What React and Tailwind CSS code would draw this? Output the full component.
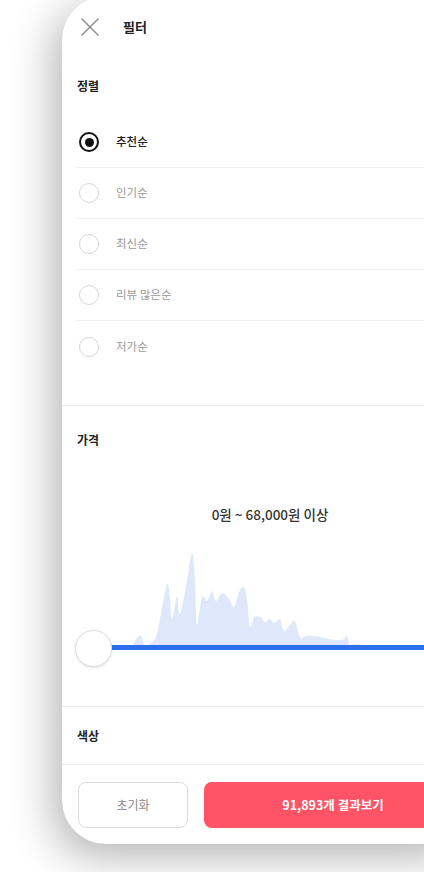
import { X } from 'lucide-react';

const font = { fontFamily: '"Noto Sans CJK KR", "Noto Sans", sans-serif' };

const sorts = ['추천순', '인기순', '최신순', '리뷰 많은순', '저가순'];

// histogram outline, panel-relative x, chart-box-relative y (baseline 103)
const pts = [
  [70, 103], [78, 91], [83, 101], [93, 95], [98, 75], [105, 40], [108, 55], [110, 75],
  [115, 52], [118, 70], [125, 37], [130, 9], [133, 35], [135, 81], [140, 53], [145, 57],
  [150, 47], [154, 57], [160, 49], [167, 55], [172, 63], [177, 48], [182, 43], [185, 55],
  [188, 83], [192, 73], [198, 73], [203, 78], [208, 75], [213, 79], [218, 75], [222, 87],
  [228, 81], [233, 77], [238, 93], [245, 92], [253, 92], [267, 95], [280, 96], [285, 92],
  [288, 103], [293, 100], [303, 101], [310, 103],
];

// catmull-rom -> cubic bezier so the peaks look smooth
function smooth(p) {
  let d = `M${p[0][0]} ${p[0][1]}`;
  for (let i = 0; i < p.length - 1; i++) {
    const p0 = p[i - 1] || p[i];
    const p1 = p[i];
    const p2 = p[i + 1];
    const p3 = p[i + 2] || p2;
    const c1 = [p1[0] + (p2[0] - p0[0]) / 6, p1[1] + (p2[1] - p0[1]) / 6];
    const c2 = [p2[0] - (p3[0] - p1[0]) / 6, p2[1] - (p3[1] - p1[1]) / 6];
    d += ` C${c1[0]} ${Math.min(103, c1[1])} ${c2[0]} ${Math.min(103, c2[1])} ${p2[0]} ${p2[1]}`;
  }
  return d + ' Z';
}
const histPath = smooth(pts);

function Radio({ on }) {
  if (on) {
    return (
      <div className="w-5 h-5 rounded-full border-[2.5px] border-[#111] flex items-center justify-center shrink-0">
        <div className="w-[9px] h-[9px] rounded-full bg-[#111]" />
      </div>
    );
  }
  return <div className="w-5 h-5 rounded-full border-[1.5px] border-[#d6d6d6] shrink-0" />;
}

export default function App() {
  return (
    <div className="w-[424px] h-[872px] overflow-hidden bg-white" style={font}>
      <div className="ml-[62px] mt-[-4px] w-[416px] bg-white rounded-[44px] shadow-[-8px_12px_44px_rgba(0,0,0,0.3)] flex flex-col">
        {/* header */}
        <div className="h-[62px] flex items-center pl-[12px]">
          <X size={32} strokeWidth={1.05} className="text-[#8a8a8a]" />
          <span className="ml-[17px] text-[13px] font-bold text-[#222]">필터</span>
        </div>

        {/* 정렬 */}
        <div className="px-[15px] pt-[18px] pb-[33px]">
          <div className="h-5 flex items-center text-[12px] font-bold text-[#222]">정렬</div>
          <div className="mt-[21px] flex flex-col">
            {sorts.map((s, i) => (
              <div key={s} className={`h-[51px] flex items-center pl-[2px] gap-[17px] ${i < sorts.length - 1 ? 'border-b border-[#f0f0f0]' : ''}`}>
                <Radio on={i === 0} />
                <span className={`text-[11.5px] ${i === 0 ? 'font-medium text-[#222]' : 'text-[#9a9a9a]'}`}>{s}</span>
              </div>
            ))}
          </div>
        </div>

        {/* 가격 */}
        <div className="border-t border-[#ececec] pt-[24px]">
          <div className="px-[15px] h-5 flex items-center text-[12px] font-bold text-[#222]">가격</div>
          <div className="mt-[54px] h-5 flex items-center justify-center text-[13.5px] font-medium text-[#333]">
            0원 ~ 68,000원 이상
          </div>
          <div className="relative mt-[20px] h-[162px]">
            <svg width="416" height="162" className="absolute left-0 top-0">
              <path d={histPath} fill="#dfe8fb" />
              <rect x="40" y="101" width="376" height="5" fill="#2c6ff0" />
            </svg>
            <div className="absolute left-[13px] top-[86px] w-[37px] h-[37px] rounded-full bg-white border border-[#dedede] shadow-[0_1px_3px_rgba(0,0,0,0.12)]" />
          </div>
        </div>

        {/* 색상 */}
        <div className="border-t border-[#ececec] h-[58px] px-[15px] flex items-center">
          <span className="text-[12px] font-bold text-[#222]">색상</span>
        </div>

        {/* footer */}
        <div className="border-t border-[#ececec] pt-[17px] pb-[16px] px-[16px] flex gap-4">
          <button className="w-[110px] h-[46px] rounded-lg border border-[#dcdcdc] bg-white text-[12px] text-[#8a8a8a]">
            초기화
          </button>
          <button className="flex-1 h-[46px] rounded-lg bg-[#ff5466] text-[12.5px] font-bold text-white">
            91,893개 결과보기
          </button>
        </div>
      </div>
    </div>
  );
}
